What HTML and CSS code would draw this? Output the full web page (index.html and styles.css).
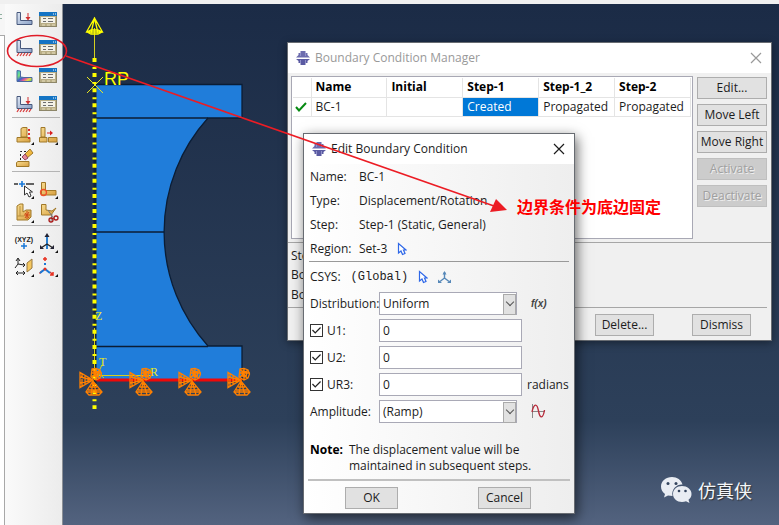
FILE: index.html
```html
<!DOCTYPE html>
<html lang="en">
<head>
<meta charset="utf-8">
<title>Boundary Condition Manager</title>
<link rel="stylesheet" href="styles.css">
</head>
<body>
<svg class="defs" width="0" height="0" aria-hidden="true">
  <defs>
    <linearGradient id="steel" x1="0" y1="0" x2="1" y2="1"><stop offset="0" stop-color="#dfe7f4"/><stop offset="1" stop-color="#8ca3c8"/></linearGradient>
    <linearGradient id="rainbow" x1="0" y1="0" x2="1" y2="1"><stop offset="0" stop-color="#35c3d8"/><stop offset=".3" stop-color="#7be07a"/><stop offset=".5" stop-color="#3a62c8"/><stop offset=".65" stop-color="#e0589a"/><stop offset=".8" stop-color="#e8d84c"/><stop offset="1" stop-color="#54c860"/></linearGradient>
    <linearGradient id="tan" x1="0" y1="0" x2="1" y2="1"><stop offset="0" stop-color="#f8dc90"/><stop offset="1" stop-color="#d8a040"/></linearGradient>
    <symbol id="ell" viewBox="0 0 24 24"><path d="M5 5.500H8.500V13.500H20V17.500H5Z" fill="url(#steel)" stroke="#47587c"/></symbol>
    <symbol id="load" viewBox="0 0 24 24"><path d="M16 6V11" stroke="#d03030"/><path d="M13.500 10H18.500L16 13.500Z" fill="#d03030"/></symbol>
    <symbol id="ticks" viewBox="0 0 24 24"><path d="M7 18L5 21M10 18L8 21M13 18L11 21M16 18L14 21M19 18L17 21" stroke="#d84040" stroke-width="1.300"/></symbol>
    <symbol id="table" viewBox="0 0 24 24"><rect x="3.500" y="5.500" width="17" height="14" fill="#b9ae86" stroke="#8d8668"/><rect x="3" y="5" width="18" height="4" fill="#1474c4"/><path d="M17 7H18M19 7H20" stroke="#fff"/><rect x="5" y="10" width="14" height="6" fill="#f4f2e8"/><path d="M7 11.500H10M12 11.500H17M7 14.500H10M12 14.500H17" stroke="#6d6d6d"/><path d="M6 18H9M11 18H14M16 18H19" stroke="#e8e0c0"/></symbol>
    <symbol id="more" viewBox="0 0 24 24"><path d="M22 19V22H19Z" fill="#111"/></symbol>
    <symbol id="logo" viewBox="0 0 14 14"><path d="M4.500 0H9.500V2H11.500V4L14 6.500H0L2.500 4V2H4.500Z" fill="#6c6cae"/><path d="M0 8H14L11.500 10V12H9.500V14H4.500V12H2.500V10Z" fill="#5a5aa2"/><path d="M4.500 2V5M9.500 2V5M4.500 9V12M9.500 9V12" stroke="#9090c8"/></symbol>
    <symbol id="pick" viewBox="0 0 10 14"><path d="M1.500 1.500V11L4 9L5.500 12.500L8 11.500L6.500 8H9Z" fill="#fff" stroke="#2f68e8" stroke-width="1.200"/></symbol>
    <symbol id="cross" viewBox="0 0 12 12"><path d="M1 1L11 11M11 1L1 11" fill="none" stroke="currentColor" stroke-width="1.200"/></symbol>
    <symbol id="fix" viewBox="0 0 32 32"><g fill="none" stroke="#ff8000" stroke-width="1.300"><path d="M16 16L3 8.500V23.500ZM16 16L3 13M16 16L3 19M5 10V22M8 12V20M11 13V18"/><path d="M16 17L9 28L12 31H22L25 28ZM16 17L14 31M16 17L20 31M9 28H25M13 23H20M11 26H23"/><path d="M15 5L19 4.500L23 6L24.500 10L23 14L19 16L14 13ZM15 5L22 14M23 6L15 13M19 4V16M14 9H25M17 7L22 8L21 13L17 12Z"/></g></symbol>
  </defs>
</svg>

<main class="app">
  <div class="tree"><span class="tree-mark"></span><div class="tree-pane"></div></div>
  <nav class="toolbar" aria-label="Load module tools">
    <div class="tools tools-tall">
      <button aria-label="Create load"><svg viewBox="0 0 24 24"><use href="#ell"/><use href="#load"/></svg></button>
      <button aria-label="Load manager"><svg viewBox="0 0 24 24"><use href="#table"/></svg></button>
      <button aria-label="Create boundary condition"><svg viewBox="0 0 24 24"><use href="#ell"/><use href="#ticks"/></svg></button>
      <button aria-label="Boundary condition manager"><svg viewBox="0 0 24 24"><use href="#table"/></svg></button>
      <button aria-label="Create predefined field"><svg viewBox="0 0 24 24"><path d="M5 7.500L8.500 8V14L12 14.500H20V18.500H5Z" fill="url(#rainbow)" stroke="#4a68a0"/></svg></button>
      <button aria-label="Predefined field manager"><svg viewBox="0 0 24 24"><use href="#table"/></svg></button>
      <button aria-label="Create load case"><svg viewBox="0 0 24 24"><use href="#ell"/><use href="#load"/><use href="#ticks"/></svg></button>
      <button aria-label="Load case manager"><svg viewBox="0 0 24 24"><use href="#table"/></svg></button>
    </div>
    <div class="tools">
      <button aria-label="Partition cell"><svg viewBox="0 0 24 24"><path d="M9 5.500L11 4.500H15V14H9ZM5 14.500H18V19H5Z" fill="url(#tan)" stroke="#a07828"/><path d="M17 6V16" stroke="#e03030" stroke-width="2" stroke-dasharray="2 2"/><use href="#more"/></svg></button>
      <button aria-label="Create instance pattern"><svg viewBox="0 0 24 24"><path d="M5 4.500H9V14H5ZM3.500 14.500H11V19H3.500ZM12.500 14.500H21V19H12.500Z" fill="url(#tan)" stroke="#a07828"/><path d="M11 10H15" stroke="#d82020"/><path d="M14 7.500L17 10L14 12.500Z" fill="#d82020"/><use href="#more"/></svg></button>
      <button aria-label="Erase"><svg viewBox="0 0 24 24"><path d="M4.500 15.500L6 14.500H17V19.500H4.500Z" fill="url(#tan)" stroke="#a07828"/><path d="M8.500 13V4.500H15" fill="none" stroke="#222" stroke-dasharray="2 2"/><path d="M13 7L18 2L21 6L15 11Z" fill="#f0b840" stroke="#a07828"/><path d="M13 7L16 11L13 13L10 10Z" fill="#e88898" stroke="#8a4860"/></svg></button>
    </div>
    <div class="tools">
      <button aria-label="Create datum"><svg viewBox="0 0 24 24"><path d="M2 7H6M14 7H22" stroke="#333" stroke-width="1.300"/><path d="M10 4V10M7 7H13" stroke="#1878d8" stroke-width="1.600"/><path d="M12.500 9V18L15 16L17 20L19 19L17.500 15H20.500Z" fill="#fff" stroke="#333"/><use href="#more"/></svg></button>
      <button aria-label="Partition edge"><svg viewBox="0 0 24 24"><path d="M5.500 5.500H9.500V13.500H20V18H5.500Z" fill="url(#tan)" stroke="#a07828"/><circle cx="7.500" cy="15.500" r="3" fill="none" stroke="#f05028" stroke-width="1.300"/><use href="#more"/></svg></button>
      <button aria-label="Partition face"><svg viewBox="0 0 24 24"><path d="M5 5L8 3H11V11L14 9H19V16L16 19H5Z" fill="url(#tan)" stroke="#a07828"/><path d="M8 5V15M5 15H12" stroke="#b89040"/><path d="M13 12L17 17M17 11L13 17M12 14H18M15 10V18" stroke="#d04818"/><use href="#more"/></svg></button>
      <button aria-label="Trim"><svg viewBox="0 0 24 24"><path d="M5.500 3.500H10V9L16 10L20 7L15 14H5.500Z" fill="url(#tan)" stroke="#a07828"/><path d="M12 9L18 18M16 13L15 20" stroke="#777"/><circle cx="15" cy="19" r="2" fill="none" stroke="#a81818" stroke-width="1.300"/><circle cx="20" cy="17" r="2" fill="none" stroke="#a81818" stroke-width="1.300"/></svg></button>
    </div>
    <div class="tools">
      <button aria-label="Datum point"><svg viewBox="0 0 24 24"><text x="12" y="11" class="xyz">(XYZ)</text><path d="M12 12V18M9 15H15" stroke="#1878d8" stroke-width="1.500"/><use href="#more"/></svg></button>
      <button aria-label="Datum axis"><svg viewBox="0 0 24 24"><path d="M11 4V18" stroke="#2a80d0" stroke-width="2"/><path d="M11 13L5 17M11 13L17 17" stroke="#222" stroke-width="1.300"/><path d="M11 2L8.500 6H13.500ZM4 14V18H8ZM18 14V18H14Z" fill="#223"/><use href="#more"/></svg></button>
      <button aria-label="Datum plane"><svg viewBox="0 0 24 24"><path d="M6 4V9L12 10M6 9L3 13M4 6L6 3L8 6M11 8L13 10L11 12M4 18H13M6 16L4 18L6 20M11 16L13 18L11 20" fill="none" stroke="#222"/><path d="M15 8L20 4V13L15 17Z" fill="#f5c860" stroke="#987840"/><use href="#more"/></svg></button>
      <button aria-label="Datum coordinate system"><svg viewBox="0 0 24 24"><path d="M9 2V6M7 4H11M3.500 18.500L6 16M14 17L17 20M14 20H17V17" fill="none" stroke="#e83020" stroke-width="1.500"/><path d="M9 8V10M9 14L4 18M9 14L14 18" stroke="#1878d8" stroke-width="2"/><circle cx="9" cy="14" r="1.500" fill="#e83020"/><use href="#more"/></svg></button>
    </div>
  </nav>
  <section class="viewport" aria-label="Viewport">
    <svg class="model" width="220" height="440" viewBox="63 4 220 440">
      <g fill="#207dda" stroke="#0b1d35" stroke-width="1.300">
        <path d="M95 84.500H242V118H208A170 170 0 0 0 208 346H242V380H95Z"/>
        <path d="M95 118H208M95 232H164M95 346.500H208" fill="none"/>
      </g>
      <path d="M95 380H242" stroke="#f00808" stroke-width="3"/>
      <path d="M95 84V395" stroke="#10233c" stroke-width="3"/>
      <path d="M94.500 28V60M94.500 328V380M96 375.500H150" stroke="#d4cf20" fill="none"/>
      <path d="M94.500 58V409" stroke="#ffff00" stroke-width="4" stroke-dasharray="4 11.100"/>
      <path d="M94.500 67V403" stroke="#ffff00" stroke-width="4" stroke-dasharray="2 13.100"/>
      <path d="M94.500 18L86.500 32H102.500ZM94.500 18L91 33M94.500 18L98 33M87 32L91 34H98L102 32L98 30H91Z" fill="none" stroke="#ffff00" stroke-width="1.300"/>
      <path d="M87 77L103 93M103 77L87 93" stroke="#e8e820"/>
      <path d="M102 365L95 379M97 372L104 378" stroke="#d4cf20"/>
      <text class="rp" x="104" y="85">RP</text>
      <text class="axis" x="95" y="320">Z</text>
      <text class="axis" x="99" y="366">T</text>
      <text class="axis" x="150" y="376">R</text>
      <use href="#fix" x="77" y="364" width="32" height="32"/>
      <use href="#fix" x="127" y="364" width="32" height="32"/>
      <use href="#fix" x="176" y="364" width="32" height="32"/>
      <use href="#fix" x="225" y="364" width="32" height="32"/>
    </svg>
    <div class="brand">
      <svg width="31" height="27" viewBox="0 0 31 27"><path d="M11 0C5 0 0 4 0 9.500C0 12.500 1.500 15 4 17L3 20.500L7 18.500L11.500 19C10 12 16 7 21.500 7.500C20.500 3 16 0 11 0Z" fill="#e9edf3"/><path d="M21 9C16 9 12 12.500 12 17C12 21.500 16 25 21 25C22.500 25 23.800 24.700 25 24.200L28.500 26L27.500 22.800C29.500 21.300 30.500 19.300 30.500 17C30.500 12.500 26 9 21 9Z" fill="#e9edf3"/><g fill="#33445d"><circle cx="7" cy="6.500" r="1.500"/><circle cx="15" cy="6.500" r="1.500"/><circle cx="18" cy="14" r="1.300"/><circle cx="24.500" cy="14" r="1.300"/></g></svg>
      <span lang="zh">仿真侠</span>
    </div>
  </section>
</main>

<section class="window manager" aria-label="Boundary Condition Manager">
  <header class="titlebar inactive">
    <svg width="14" height="14"><use href="#logo"/></svg>
    <h2>Boundary Condition Manager</h2>
    <button class="close" aria-label="Close manager"><svg width="12" height="12"><use href="#cross"/></svg></button>
  </header>
  <div class="manager-body">
    <div class="list">
      <table>
        <thead><tr><th class="mark"></th><th>Name</th><th>Initial</th><th>Step-1</th><th>Step-1_2</th><th>Step-2</th></tr></thead>
        <tbody><tr><td class="mark"><svg width="12" height="10" viewBox="0 0 12 10"><path d="M1 5L4 8.500L11 1" fill="none" stroke="#078a12" stroke-width="2"/></svg></td><td>BC-1</td><td></td><td class="selected">Created</td><td>Propagated</td><td>Propagated</td></tr></tbody>
      </table>
    </div>
    <div class="side">
      <button class="btn">Edit...</button>
      <button class="btn">Move Left</button>
      <button class="btn">Move Right</button>
      <button class="btn" disabled>Activate</button>
      <button class="btn" disabled>Deactivate</button>
    </div>
  </div>
  <div class="details">
    <p>Ste</p>
    <p>Bo</p>
    <p>Bo</p>
  </div>
  <footer class="manager-actions">
    <button class="btn">Delete...</button>
    <button class="btn">Dismiss</button>
  </footer>
</section>

<section class="window editor" aria-label="Edit Boundary Condition">
  <header class="titlebar">
    <svg width="14" height="14"><use href="#logo"/></svg>
    <h2>Edit Boundary Condition</h2>
    <button class="close" aria-label="Close editor"><svg width="12" height="12"><use href="#cross"/></svg></button>
  </header>
  <dl class="facts">
    <dt>Name:</dt><dd>BC-1</dd>
    <dt>Type:</dt><dd>Displacement/Rotation</dd>
    <dt>Step:</dt><dd>Step-1 (Static, General)</dd>
    <dt>Region:</dt><dd>Set-3 <button class="glyph" aria-label="Edit region"><svg width="10" height="14"><use href="#pick"/></svg></button></dd>
  </dl>
  <div class="csys">
    <span>CSYS:</span><span class="mono">(Global)</span>
    <button class="glyph" aria-label="Pick CSYS"><svg width="10" height="14"><use href="#pick"/></svg></button>
    <button class="glyph" aria-label="Create CSYS"><svg width="13" height="13" viewBox="0 0 13 13"><path d="M6.500 1V7L2 10.500M6.500 7L11 10.500" fill="none" stroke="#5688b8" stroke-width="1.400"/><path d="M4.500 3.500L6.500 0L8.500 3.500ZM0 8.500V12H4ZM13 8.500V12H9Z" fill="#5688b8"/></svg></button>
  </div>
  <div class="form">
    <label for="dist">Distribution:</label>
    <div class="combo"><select id="dist"><option>Uniform</option></select></div>
    <button class="glyph fx" aria-label="Create expression field">f(x)</button>

    <div class="check"><input type="checkbox" id="c1" checked><label for="c1">U1:</label></div>
    <input class="field" type="text" value="0" aria-label="U1 value"><span></span>

    <div class="check"><input type="checkbox" id="c2" checked><label for="c2">U2:</label></div>
    <input class="field" type="text" value="0" aria-label="U2 value"><span></span>

    <div class="check"><input type="checkbox" id="c3" checked><label for="c3">UR3:</label></div>
    <input class="field" type="text" value="0" aria-label="UR3 value"><span class="unit">radians</span>

    <label for="amp">Amplitude:</label>
    <div class="combo"><select id="amp"><option>(Ramp)</option></select></div>
    <button class="glyph" aria-label="Create amplitude"><svg width="15" height="15" viewBox="0 0 15 15"><path d="M1.500 0V14M1 7.500H14" stroke="#888"/><path d="M1 8C3 -1 6 -1 7.500 7C9 15 12 15 13.500 6" fill="none" stroke="#b82c3c" stroke-width="1.400"/></svg></button>
  </div>
  <div class="note"><strong>Note:</strong><p>The displacement value will be<br>maintained in subsequent steps.</p></div>
  <footer class="editor-actions">
    <button class="btn">OK</button>
    <button class="btn">Cancel</button>
  </footer>
</section>

<svg class="markup" width="520" height="230" viewBox="0 0 520 230" aria-hidden="true">
  <ellipse cx="37" cy="51" rx="29.500" ry="15.500" fill="none" stroke="#e01c28" stroke-width="1.600"/>
  <path d="M66 56L494 206" stroke="#ec1c24" stroke-width="1.600"/>
  <path d="M507 210L490 212L496 199Z" fill="#ec1c24"/>
</svg>
<p class="remark" lang="zh">边界条件为底边固定</p>
</body>
</html>
```
FILE: styles.css
```css
* { box-sizing: border-box; }

body {
  margin: 0;
  min-height: 100vh;
  position: relative;
  overflow: hidden;
  background: #f0f0f0;
  color: #1c1c1c;
  font: 12px/16px "Open Sans", "Noto Sans", "Noto Sans CJK SC", sans-serif;
}

h2, p, dl, dd { margin: 0; }
button, input, select { font: inherit; color: inherit; }
svg { display: block; }
.defs { position: absolute; }

/* Application shell */
.app { display: flex; height: 100vh; padding-top: 4px; }
.tree { width: 5px; display: flex; flex-direction: column; background: #f6f6f6; }
.tree-mark { height: 31px; background: linear-gradient(#f6f6f6 10px, #8fb0a0 10px 11px, #f6f6f6 11px 14px, #8fb0a0 14px 15px, #f6f6f6 15px); width: 2px; }
.tree-pane { flex: 1; background: #fff; border: solid #a8a8a8; border-width: 1px 1px 0 0; }
.toolbar { width: 57px; padding: 1px 2px 0 7px; background: linear-gradient(90deg, #fafafa, #ececec); }
.tools { display: grid; grid-template-columns: 24px 24px; grid-auto-rows: 24px; padding-top: 5px; border-top: 1px solid #b4b4b4; }
.tools-tall { grid-auto-rows: 28px; padding-top: 0; border-top: 0; }
.tools button { display: grid; place-items: center; padding: 0; border: 0; background: none; }
.tools svg { width: 24px; height: 24px; }
.xyz { font: bold 7px "Liberation Sans", sans-serif; text-anchor: middle; fill: #222; }

.viewport {
  flex: 1;
  display: flex;
  justify-content: space-between;
  align-items: flex-start;
  border: solid #8c9096;
  border-width: 0 0 0 1px;
  background: linear-gradient(#1b2b46, #2d405a 80%, #53637f);
}
.rp { font: 18px "Liberation Sans", sans-serif; fill: #ffff00; }
.axis { font: 12px "Liberation Serif", serif; fill: #e8e820; }
.brand { display: flex; align-items: center; gap: 6px; align-self: flex-end; padding: 0 27px 21px 0; color: #f4f6f9; font-size: 18px; line-height: 26px; text-shadow: 1px 1px 1px #333; }

/* Windows */
.window { position: absolute; display: flex; flex-direction: column; border: 1px solid #686c72; background: #f0f0f0; }
.manager { left: 287px; top: 42px; width: 485px; box-shadow: 0 2px 8px #0006; }
.editor { left: 303px; top: 133px; width: 272px; background: linear-gradient(90deg, #fff, #eee); box-shadow: 2px 4px 12px #0009; }
.titlebar { display: flex; align-items: center; gap: 5px; height: 30px; padding: 0 9px 0 8px; background: #fff; }
.titlebar h2 { flex: 1; font-size: 12px; font-weight: 400; }
.inactive { color: #999; }
.close, .glyph { display: grid; place-items: center; padding: 0; border: 0; background: none; }
.close { color: inherit; }
.btn { height: 22px; padding: 0; border: 1px solid #adadad; background: #e1e1e1; line-height: 16px; white-space: nowrap; }
.btn:disabled { background: #ccc; border-color: #bfbfbf; color: #a0a0a0; text-shadow: 1px 1px 0 #eee; }

/* Manager */
.manager-body { display: flex; gap: 4px; padding: 3px 4px 3px 3px; border-bottom: 1px solid #a6a6a6; }
.list { flex: 1; height: 163px; padding: 1px; border: 1px solid #a8a8b4; background: #fff; }
table { width: 100%; border-collapse: collapse; table-layout: fixed; }
th, td { height: 19px; padding: 0 0 0 4px; border: solid #e4e4e4; border-width: 0 1px 1px 0; text-align: left; line-height: 16px; white-space: nowrap; }
th { color: #000; }
.mark { width: 18px; padding-left: 2px; }
.selected { background: #0078d7; color: #fff; }
.side { width: 70px; display: flex; flex-direction: column; gap: 5px; padding-top: 1px; }
.details { display: flex; flex-direction: column; gap: 4px; height: 65px; margin-right: 4px; padding: 5px 3px; border-bottom: 1px solid #a6a6a6; }
.details p { width: 12px; overflow: hidden; }
.manager-actions { display: flex; justify-content: flex-end; gap: 38px; padding: 6px 20px 4px; }
.manager-actions .btn { width: 59px; }

/* Editor */
.facts { display: grid; grid-template-columns: 49px 1fr; grid-auto-rows: 24px; align-items: center; margin: 0 5px; padding: 1px 0 0 1px; border-bottom: 1px solid #999; }
.facts dd { display: flex; align-items: center; gap: 10px; }
.csys { display: flex; align-items: center; gap: 10px; height: 30px; padding-left: 6px; }
.csys .mono { font: 12px/16px "Liberation Mono", monospace; }
.form { display: grid; grid-template-columns: 69px 143px 1fr; grid-auto-rows: 23px; row-gap: 4px; align-items: center; padding-left: 6px; }
.combo { position: relative; width: 138px; height: 23px; }
.combo select, .field { width: 100%; height: 23px; padding: 0 3px; border: 1px solid #a9a9b6; border-radius: 0; background: #fff; appearance: none; outline: 0; }
.combo::before { content: ""; position: absolute; right: 1px; top: 2px; width: 11px; height: 19px; border: 1px solid #aaa; background: #e1e1e1; pointer-events: none; }
.combo::after { content: ""; position: absolute; right: 4px; top: 7px; width: 5px; height: 5px; border: solid #555; border-width: 0 1px 1px 0; transform: rotate(45deg); pointer-events: none; }
.check { display: flex; align-items: center; gap: 4px; }
.check input { display: grid; place-items: center; width: 13px; height: 13px; margin: 0; border: 1px solid #333; background: #fff; appearance: none; }
.check input:checked::before { content: ""; width: 9px; height: 9px; background: #222; clip-path: polygon(0 50%, 10% 40%, 36% 68%, 90% 12%, 100% 22%, 36% 86%); }
.form .glyph { justify-self: start; margin-left: 9px; }
.form .fx { font: italic bold 10px/16px "Liberation Sans", sans-serif; color: #444; }
.unit { padding-left: 5px; }
.note { display: flex; gap: 6px; margin: 0 4px; padding: 19px 0 5px 2px; border-bottom: 2px solid #c0c0c0; }
.note strong { color: #000; }
.editor-actions { display: flex; justify-content: space-between; padding: 6px 43px 4px 41px; }
.editor-actions .btn { width: 53px; }

/* Annotation */
.markup { position: absolute; left: 0; top: 0; pointer-events: none; }
.remark { position: absolute; left: 517px; top: 196px; color: #ff0000; font: bold 16px/20px "Noto Sans CJK SC", sans-serif; white-space: nowrap; }
```
